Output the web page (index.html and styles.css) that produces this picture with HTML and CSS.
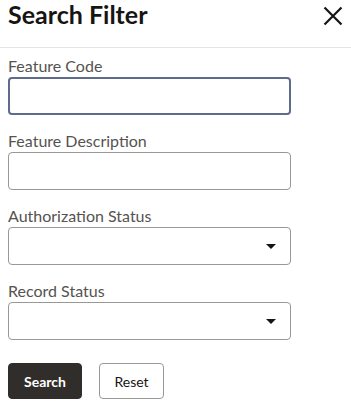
FILE: index.html
```html
<!DOCTYPE html>
<html lang="en">
<head>
<meta charset="utf-8">
<title>Search Filter</title>
<link rel="stylesheet" href="styles.css">
</head>
<body>
<div class="panel">
  <header class="header">
    <h1 class="title">Search Filter</h1>
    <button class="close" aria-label="Close">
      <svg width="20" height="20" viewBox="0 0 20 20"><path d="M1.5 1.5 L18.5 18.5 M18.5 1.5 L1.5 18.5" stroke="#161513" stroke-width="2.2" fill="none"/></svg>
    </button>
  </header>
  <form class="form">
    <div class="field">
      <label class="label">Feature Code</label>
      <div class="input focused"></div>
    </div>
    <div class="field">
      <label class="label">Feature Description</label>
      <div class="input"></div>
    </div>
    <div class="field">
      <label class="label">Authorization Status</label>
      <div class="input select"><span class="caret"></span></div>
    </div>
    <div class="field">
      <label class="label">Record Status</label>
      <div class="input select"><span class="caret"></span></div>
    </div>
    <div class="actions">
      <button type="button" class="btn primary">Search</button>
      <button type="button" class="btn secondary">Reset</button>
    </div>
  </form>
</div>
</body>
</html>
```

FILE: styles.css
```css
* { box-sizing: border-box; }
html, body { margin: 0; padding: 0; background: #fff; }
body { font-family: "Lato", "Noto Sans", sans-serif; color: #161513; }
.panel { width: 351px; }
.header {
  height: 48px;
  display: flex;
  justify-content: space-between;
  align-items: flex-start;
  padding: 0 6px 0 8px;
  border-bottom: 1px solid #e4e4e4;
}
.title {
  margin: 0;
  font-size: 25px;
  line-height: 28px;
  font-weight: 700;
  color: #161513;
}
.close {
  border: 0;
  background: none;
  padding: 0;
  margin-top: 6px;
  margin-right: 2px;
  width: 20px;
  height: 20px;
  display: flex;
}
.form {
  padding: 7px 8px 0 8px;
  display: flex;
  flex-direction: column;
  gap: 15px;
}
.field { display: flex; flex-direction: column; }
.label {
  font-size: 16px;
  line-height: 22px;
  color: #55534f;
}
.input {
  width: 283px;
  height: 38px;
  border: 1px solid #9a9895;
  border-radius: 4px;
  background: #fff;
  position: relative;
}
.input.focused { border: 2px solid #5f6b8b; }
.select { display: flex; align-items: center; justify-content: flex-end; padding-right: 14px; }
.caret {
  width: 0; height: 0;
  border-left: 5px solid transparent;
  border-right: 5px solid transparent;
  border-top: 5px solid #161513;
}
.actions { display: flex; gap: 17px; margin-top: 8px; }
.btn {
  height: 36px;
  border-radius: 4px;
  font-family: "Lato", "Noto Sans", sans-serif;
  font-size: 14px;
  padding: 0;
}
.primary {
  width: 74px;
  background: #312d2a;
  border: 1px solid #312d2a;
  color: #fff;
  font-weight: 700;
}
.secondary {
  width: 65px;
  background: #fff;
  border: 1px solid #9a9895;
  color: #161513;
  font-weight: 400;
}
```
